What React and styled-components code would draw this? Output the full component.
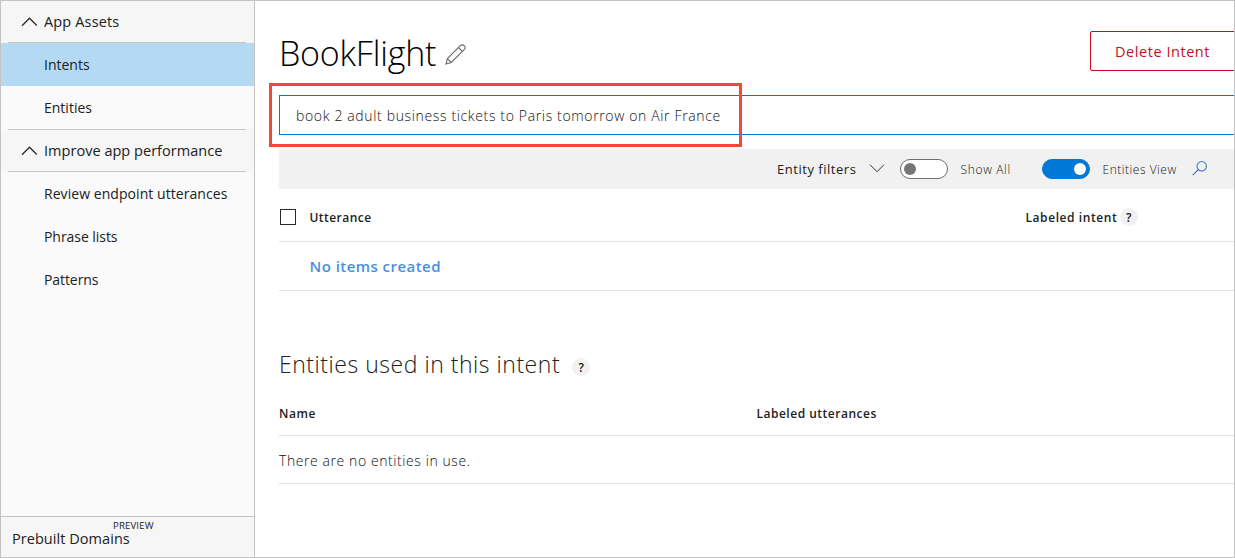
import React from "react";
import styled, { createGlobalStyle } from "styled-components";

const GlobalStyle = createGlobalStyle`
  *, *::before, *::after { box-sizing: border-box; }
  body { margin: 0; overflow: hidden; }
`;

const Frame = styled.div`
  position: relative;
  display: flex;
  width: 1235px;
  height: 558px;
  border: 1px solid #c3c3c3;
  background: #fff;
  color: #212121;
  font-family: "Open Sans", "Noto Sans", sans-serif;
  overflow: hidden;
`;

const Text = styled.span`
  display: block;
  flex: none;
  white-space: nowrap;
  font-size: ${(p) => p.$size}px;
  font-weight: ${(p) => p.$weight || 400};
  letter-spacing: ${(p) => p.$track || 0}px;
  line-height: ${(p) => p.$line || 20}px;
  color: ${(p) => p.$color || "inherit"};
`;

const HeadText = styled(Text)`
  padding-top: 2px;
  font-size: 12px;
  font-weight: 600;
`;

const Sidebar = styled.nav`
  display: flex;
  flex-direction: column;
  flex: none;
  width: 254px;
  background: #fafafa;
  border-right: 1px solid #c3c3c3;
`;

const GroupHeader = styled.div`
  display: flex;
  align-items: center;
  gap: 7px;
  height: ${(p) => (p.$ruled ? 43 : 42)}px;
  padding: 0 8px 0 20px;
  background:
    linear-gradient(#c8c8c8, #c8c8c8) 7px 100% / 238px 1px no-repeat,
    ${(p) => (p.$ruled ? "linear-gradient(#c8c8c8, #c8c8c8) 7px 0 / 238px 1px no-repeat," : "")}
    #f6f6f6;
`;

const NavItem = styled.div`
  display: flex;
  align-items: center;
  height: 43px;
  padding-left: 43px;
  background: ${(p) => (p.$active ? "#b3daf2" : "transparent")};
`;

const SidebarFooter = styled.div`
  display: flex;
  flex-direction: column;
  height: 41px;
  margin-top: auto;
  padding: 3px 0 0 11px;
  border-top: 1px solid #c3c3c3;
  background: #f6f6f6;
`;

const PreviewTag = styled.div`
  display: flex;
  padding-left: 101px;
  height: 8px;
`;

const Main = styled.main`
  display: flex;
  flex-direction: column;
  flex: 1;
  min-width: 0;
  padding-left: 24px;
`;

const TitleRow = styled.header`
  display: flex;
  align-items: flex-start;
  height: 94px;
`;

const Title = styled.div`
  display: flex;
  align-items: center;
  gap: 9px;
  padding-top: 30px;

  svg { margin-top: 3px; }
`;

const DeleteButton = styled.div`
  display: flex;
  flex: none;
  align-items: center;
  width: 160px;
  height: 40px;
  margin: 30px -16px 0 auto;
  padding: 1px 0 0 24px;
  border: 1px solid #c50f1f;
  border-radius: 2px;
`;

const UtteranceInput = styled.div`
  display: flex;
  align-items: center;
  height: 40px;
  padding: 2px 0 0 16px;
  border: 1px solid #0078d7;
  border-right: 0;
`;

const Toolbar = styled.div`
  display: flex;
  align-items: center;
  height: 40px;
  margin-top: 14px;
  padding-left: 498px;
  background: #f1f1f1;
`;

const Toggle = styled.div`
  display: flex;
  flex: none;
  align-items: center;
  justify-content: ${(p) => (p.$on ? "flex-end" : "flex-start")};
  width: 48px;
  height: 20px;
  padding: 0 3px;
  border: 1px solid ${(p) => (p.$on ? "#0078d7" : "#6e6e6e")};
  border-radius: 10px;
  background: ${(p) => (p.$on ? "#0078d7" : "#fff")};
`;

const Knob = styled.div`
  width: 12px;
  height: 12px;
  border-radius: 50%;
  background: ${(p) => (p.$on ? "#fff" : "#767676")};
`;

const ToolCell = styled.div`
  display: flex;
  flex: none;
  align-items: center;
  width: ${(p) => p.$w}px;
  padding-top: ${(p) => p.$drop || 0}px;
`;

const Row = styled.div`
  display: flex;
  flex: none;
  align-items: center;
  height: ${(p) => p.$h}px;
  padding-top: ${(p) => p.$drop || 0}px;
  padding-left: ${(p) => p.$indent || 0}px;
  border-bottom: 1px solid #e3e3e3;
`;

const Checkbox = styled.div`
  width: 16px;
  height: 16px;
  margin-left: 1px;
  border: 1px solid #2b2b2b;
`;

const Column = styled.div`
  display: flex;
  flex: none;
  align-items: center;
  width: ${(p) => p.$w}px;
`;

const Help = styled.div`
  display: flex;
  flex: none;
  align-items: center;
  justify-content: center;
  width: 18px;
  height: 18px;
  margin: ${(p) => p.$drop || 0}px 0 0 ${(p) => p.$gap}px;
  padding-top: 1px;
  border-radius: 50%;
  background: #f1f1f1;
`;

const SectionTitle = styled.div`
  display: flex;
  align-items: center;
  height: 32px;
  margin-top: 57px;
`;

const Highlight = styled.div`
  position: absolute;
  left: 268px;
  top: 82px;
  width: 473px;
  height: 64px;
  border: 3px solid #f04937;
`;

const ChevronUp = () => (
  <svg width="16" height="10" viewBox="0 0 16 10" fill="none" stroke="#2b2b2b" strokeWidth="1.3">
    <path d="M1 8.700 8.500 1.200l7.300 7.300" />
  </svg>
);
const ChevronDown = () => (
  <svg width="16" height="10" viewBox="0 0 16 10" fill="none" stroke="#333" strokeWidth="1">
    <path d="M1 .700 8 7.700l7-7" />
  </svg>
);
const Pencil = () => (
  <svg width="21" height="21" viewBox="0 0 21 21" fill="none" stroke="#6b6b6b" strokeWidth="1.1">
    <path d="M1 20l1.400-5.400L15.300 1.700a2.500 2.500 0 0 1 3.900 3.900L6.300 18.500zM2.400 14.600l3.900 3.900M13.500 3.500l3.900 3.900" />
  </svg>
);
const Search = () => (
  <svg width="16" height="18" viewBox="0 0 16 18" fill="none" stroke="#4472d4" strokeWidth="1.1">
    <circle cx="9.700" cy="6.200" r="4.700" />
    <path d="M6.400 9.500 .700 15.200" />
  </svg>
);

export default function App() {
  return (
    <>
      <GlobalStyle />
      <Frame>
        <Sidebar>
          <GroupHeader><ChevronUp /><Text $size={14.5} $weight={500} $track={0.15}>App Assets</Text></GroupHeader>
          <NavItem $active><Text $size={14}>Intents</Text></NavItem>
          <NavItem><Text $size={14}>Entities</Text></NavItem>
          <GroupHeader $ruled><ChevronUp /><Text $size={14.5} $weight={500} $track={0.03}>Improve app performance</Text></GroupHeader>
          <NavItem><Text $size={14} $track={0.06}>Review endpoint utterances</Text></NavItem>
          <NavItem><Text $size={14} $track={-0.05}>Phrase lists</Text></NavItem>
          <NavItem><Text $size={14} $track={-0.08}>Patterns</Text></NavItem>
          <SidebarFooter>
            <PreviewTag><Text $size={9.6} $line={12} $track={0.15}>PREVIEW</Text></PreviewTag>
            <Text $size={14.5} $weight={500} $line={22} $track={0.05}>Prebuilt Domains</Text>
          </SidebarFooter>
        </Sidebar>
        <Main>
          <TitleRow>
            <Title><Text $size={34} $weight={300} $line={44} $track={-0.2} $color="#000">BookFlight</Text><Pencil /></Title>
            <DeleteButton><Text $size={14.5} $weight={500} $track={0.55} $color="#c50f1f">Delete Intent</Text></DeleteButton>
          </TitleRow>
          <UtteranceInput><Text $size={14} $weight={350} $track={0.645} $color="#111">book 2 adult business tickets to Paris tomorrow on Air France</Text></UtteranceInput>
          <Toolbar>
            <ToolCell $w={91.5}><Text $size={13} $track={0.53}>Entity filters</Text></ToolCell>
            <ToolCell $w={31.5}><ChevronDown /></ToolCell>
            <ToolCell $w={60.5}><Toggle><Knob /></Toggle></ToolCell>
            <ToolCell $w={81.5} $drop={2}><Text $size={12} $weight={350} $track={0.66} $color="#111">Show All</Text></ToolCell>
            <ToolCell $w={60.5}><Toggle $on><Knob $on /></Toggle></ToolCell>
            <ToolCell $w={89.5} $drop={2}><Text $size={12} $weight={350} $track={0.52} $color="#111">Entities View</Text></ToolCell>
            <Search />
          </Toolbar>
          <Row $h={53} $drop={4}>
            <Column $w={30.5}><Checkbox /></Column>
            <Column $w={716}><HeadText $track={0.45}>Utterance</HeadText></Column>
            <HeadText $track={0.57}>Labeled intent</HeadText><Help $gap={2.5}><Text $size={12} $weight={600} $line={18}>?</Text></Help>
          </Row>
          <Row $h={49} $indent={30.5}><Text $size={15} $weight={600} $track={0.45} $color="#4a90d9">No items created</Text></Row>
          <SectionTitle><Text $size={23} $weight={350} $line={32} $track={0.53}>Entities used in this intent</Text><Help $gap={12} $drop={6}><Text $size={12} $weight={600} $line={18}>?</Text></Help></SectionTitle>
          <Row $h={56} $drop={11}>
            <Column $w={477.5}><HeadText $track={0.6}>Name</HeadText></Column>
            <HeadText $track={0.5}>Labeled utterances</HeadText>
          </Row>
          <Row $h={48} $drop={3}><Text $size={14} $weight={350} $track={0.58} $color="#111">There are no entities in use.</Text></Row>
        </Main>
        <Highlight />
      </Frame>
    </>
  );
}
